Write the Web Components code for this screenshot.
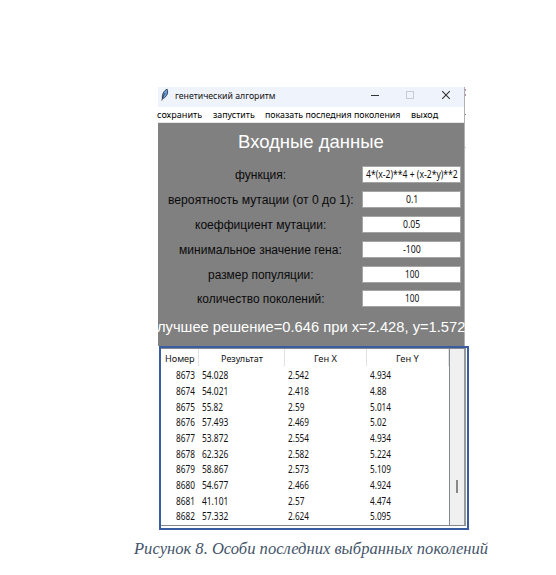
<!DOCTYPE html>
<html lang="ru"><head><meta charset="utf-8"><title>генетический алгоритм</title>
<style>
html,body{margin:0;background:#fff}
body{width:556px;height:575px;overflow:hidden}
</style></head><body>
<report-figure></report-figure>
<script>
// Single-line text squeezed horizontally to the width given in the "w" attribute.
customElements.define('fit-text', class extends HTMLElement {
  connectedCallback() {
    const root = this.attachShadow({mode: 'open'});
    root.innerHTML = `<style>:host{display:block;flex:none;white-space:pre;width:${this.getAttribute('w')}px}
      span{display:inline-block;transform-origin:0 50%}</style><span></span>`;
    const s = root.querySelector('span');
    s.textContent = this.getAttribute('text');
    s.style.transform = `scaleX(${this.getAttribute('w') / s.offsetWidth})`;
  }
});
customElements.define('title-bar', class extends HTMLElement {
  connectedCallback() {
    this.attachShadow({mode: 'open'}).innerHTML = `<style>
      :host{display:flex;height:20px;background:#eff3fb;font:9.7px/18px "Noto Sans",sans-serif;color:#111}
      .feather{width:10px;height:14px;margin:1px 5px 0 2px;flex:none}
      .buttons{margin-left:auto;width:98px;height:18px;flex:none}
    </style>
    <svg class="feather" viewBox="0 0 10 14"><path d="M2.4 10.5C2 6.5 3.6 2.5 7.2 1.3C8.4 4.6 7 8.4 3.6 10.3Z" fill="#6a9fd6" stroke="#26384c" stroke-width=".9"/><path d="M1.8 12.6C2.6 9.5 3.8 7 5 5.2" fill="none" stroke="#1c2a3a" stroke-width=".8"/></svg>
    <fit-text w="101" text="генетический алгоритм"></fit-text>
    <svg class="buttons" viewBox="0 0 98 18" fill="none"><path d="M5 8.5H13" stroke="#333"/><rect x="40.5" y="4.5" width="7" height="7" stroke="#c8cbd0"/><path d="M76.2 4.2L83.8 11.8M83.8 4.2L76.2 11.8" stroke="#333" stroke-width="1.1"/></svg>`;
  }
});
customElements.define('menu-bar', class extends HTMLElement {
  connectedCallback() {
    this.attachShadow({mode: 'open'}).innerHTML = `<style>
      :host{display:flex;height:15px;gap:10.5px;margin-left:-1px;font:9.7px/16px "Noto Sans",sans-serif;color:#000;border-bottom:1px solid #e8e8e8}
    </style><fit-text w="45" text="сохранить"></fit-text><fit-text w="42" text="запустить"></fit-text><fit-text w="135" text="показать последния поколения"></fit-text><fit-text w="27" text="выход"></fit-text>`;
  }
});
customElements.define('form-row', class extends HTMLElement {
  connectedCallback() {
    const a = n => this.getAttribute(n);
    this.attachShadow({mode: 'open'}).innerHTML = `<style>
      :host{display:flex;height:24.9px;align-items:flex-start}
      .label{width:204px;padding-left:1px;box-sizing:border-box;display:flex;justify-content:center;font:12.5px/19px "Liberation Sans",sans-serif;color:#0a0a0a}
      .field{width:99px;height:17px;box-sizing:border-box;border:1px solid #a4a4a4;background:#fff;display:flex;justify-content:center;overflow:hidden;font:10.2px/15.5px "Noto Sans",sans-serif;color:#111}
    </style><div class="label"><fit-text w="${a('lw')}" text="${a('label')}"></fit-text></div>
    <div class="field"><fit-text w="${a('vw')}" text="${a('value')}"></fit-text></div>`;
  }
});
customElements.define('input-panel', class extends HTMLElement {
  connectedCallback() {
    const rows = [['функция:',51,'4*(x-2)**4 + (x-2*y)**2',92],['вероятность мутации (от 0 до 1):',186,'0.1',12],
      ['коеффициент мутации:',131,'0.05',17],['минимальное значение гена:',163,'-100',18],
      ['размер популяции:',106,'100',14],['количество поколений:',128,'100',14]];
    this.attachShadow({mode: 'open'}).innerHTML = `<style>
      :host{display:flex;flex-direction:column;height:223px;background:#808080;color:#fff}
      .head{display:flex;justify-content:center;height:43px;font:19px/38px "Liberation Sans",sans-serif}
      .best{font:15px/20px "Liberation Sans",sans-serif;margin-top:2px;margin-left:-1px}
    </style><div class="head"><fit-text w="146" text="Входные данные"></fit-text></div>
    ${rows.map(r => `<form-row label="${r[0]}" lw="${r[1]}" value="${r[2]}" vw="${r[3]}"></form-row>`).join('')}
    <div class="best"><fit-text w="308" text="лучшее решение=0.646 при x=2.428, y=1.572"></fit-text></div>`;
  }
});
customElements.define('result-table', class extends HTMLElement {
  connectedCallback() {
    const rows = [[8673,'54.028','2.542','4.934'],[8674,'54.021','2.418','4.88'],[8675,'55.82','2.59','5.014'],
      [8676,'57.493','2.469','5.02'],[8677,'53.872','2.554','4.934'],[8678,'62.326','2.582','5.224'],
      [8679,'58.867','2.573','5.109'],[8680,'54.677','2.466','4.924'],[8681,'41.101','2.57','4.474'],[8682,'57.332','2.624','5.095']];
    const width = s => [...String(s)].reduce((n, c) => n + (c === '.' ? 2.3 : 4.75), 0);
    const cell = s => `<div><fit-text w="${width(s)}" text="${s}"></fit-text></div>`;
    this.attachShadow({mode: 'open'}).innerHTML = `<style>
      :host{display:flex;box-sizing:border-box;width:310px;height:184px;border:2px solid #3a5da0;background:#fff;font:10px/15.7px "Noto Sans",sans-serif;color:#111}
      .frame{display:flex;flex:1;margin:0 1px 2px 0;border:1px solid #828790;border-left:0;border-right:0}
      .table{width:288px}
      .row{display:grid;grid-template-columns:38px 86px 82px 82px;height:15.7px}
      .row div{padding-left:3.2px;display:flex}
      .row div:first-child{padding:0 4px 0 0;justify-content:flex-end}
      .top{height:19.2px;line-height:19px;font-size:9.7px}
      .top div,.top div:first-child{padding:0;justify-content:center;border-right:1px solid #e2e2e2;height:17px}
      .bar{flex:1;background:#f0f0f0;border-left:1px solid #828790;border-right:2px solid #999;box-sizing:border-box}
      .thumb{width:2px;height:13px;background:#898989;margin:131px 0 0 6px}
    </style><div class="frame"><div class="table"><div class="row top"><div><fit-text w="30" text="Номер"></fit-text></div><div><fit-text w="42" text="Результат"></fit-text></div><div><fit-text w="23" text="Ген X"></fit-text></div><div><fit-text w="23" text="Ген Y"></fit-text></div></div>
    ${rows.map(r => `<div class="row">${r.map(cell).join('')}</div>`).join('')}</div>
    <div class="bar"><div class="thumb"></div></div></div>`;
  }
});
customElements.define('report-figure', class extends HTMLElement {
  connectedCallback() {
    this.attachShadow({mode: 'open'}).innerHTML = `<style>
      :host{display:flex;flex-direction:column;padding-top:87px}
      .top{display:flex}
      .win{width:306px;margin-left:158px;border-right:1px solid #b0b0b0;height:259px}
      .edge{width:2px;height:128px}
      .edge i{display:block;width:1px}
      .a{height:2px;margin-top:2px;background:#b48ab8}
      .b{height:2px;margin-top:3px;background:#b48ab8}
      .c{height:1px;margin-top:18px;background:#888}
      .d{height:1px;margin-top:32px;background:#bbb}
      result-table{margin-left:159px}
      .caption{margin:8px 0 0 134px;font:italic 17px/22px "Liberation Serif",serif;color:#44546a}
    </style><div class="top"><div class="win"><title-bar></title-bar><menu-bar></menu-bar><input-panel></input-panel></div><div class="edge"><i class="a"></i><i class="b"></i><i class="c"></i><i class="d"></i></div></div>
    <result-table></result-table>
    <div class="caption"><fit-text w="354.5" text="Рисунок 8. Особи последних выбранных поколений"></fit-text></div>`;
  }
});
</script></body></html>
